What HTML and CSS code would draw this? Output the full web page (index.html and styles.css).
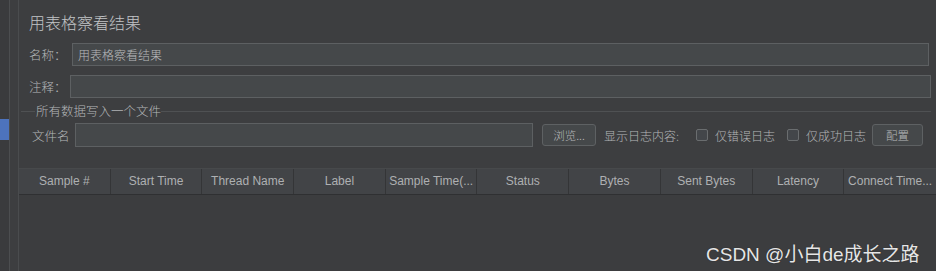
FILE: index.html
```html
<!DOCTYPE html>
<html lang="zh-CN">
<head>
    <meta charset="UTF-8">
    <title>用表格察看结果</title>
    <link rel="stylesheet" href="styles.css">
</head>
<body>
    <div class="app">
        <div class="side"><div class="marker"></div></div>
        <div class="gutter"></div>
        <div class="main">
            <div class="content">
                <h1 class="title">用表格察看结果</h1>

                <div class="row row-name">
                    <label class="label">名称：</label>
                    <div class="field">用表格察看结果</div>
                </div>

                <div class="row row-comment">
                    <label class="label">注释：</label>
                    <div class="field"></div>
                </div>

                <div class="group">
                    <div class="legend"><span>所有数据写入一个文件</span></div>
                    <div class="row row-file">
                        <label class="label">文件名</label>
                        <div class="field file-field"></div>
                        <button class="btn btn-browse">浏览...</button>
                        <span class="log-label">显示日志内容:</span>
                        <span class="check"></span>
                        <span class="check-label">仅错误日志</span>
                        <span class="check"></span>
                        <span class="check-label">仅成功日志</span>
                        <button class="btn btn-config">配置</button>
                    </div>
                </div>
            </div>

            <div class="table">
                <div class="thead">
                    <div class="th">Sample #</div>
                    <div class="th">Start Time</div>
                    <div class="th">Thread Name</div>
                    <div class="th">Label</div>
                    <div class="th">Sample Time(...</div>
                    <div class="th">Status</div>
                    <div class="th">Bytes</div>
                    <div class="th">Sent Bytes</div>
                    <div class="th">Latency</div>
                    <div class="th">Connect Time...</div>
                </div>
                <div class="tbody"></div>
            </div>
        </div>
    </div>

    <div class="watermark">CSDN @小白de成长之路</div>
</body>
</html>
```

FILE: styles.css
```css
* {
    box-sizing: border-box;
    margin: 0;
    padding: 0;
}

body {
    font-family: "Noto Sans CJK SC", "Liberation Sans", sans-serif;
    font-size: 12px;
    color: #b4b6b8;
    background: #3c3d3f;
    width: 936px;
    height: 271px;
    overflow: hidden;
    position: relative;
}

.app {
    display: flex;
    height: 271px;
}

.side {
    width: 10px;
    background: #3a3b3d;
    border-right: 1px solid #4c4e50;
    padding-top: 119px;
}

.marker {
    width: 9px;
    height: 21px;
    background: #4d73bd;
}

.gutter {
    width: 9px;
    background: #3d3e40;
    border-right: 1px solid #4a4c4e;
}

.main {
    flex: 1;
    display: flex;
    flex-direction: column;
    background: #3d3e40;
}

.content {
    padding: 12px 5px 0 10px;
}

.title {
    font-size: 16px;
    font-weight: 300;
    line-height: 20px;
    color: #c2c4c6;
    height: 20px;
}

.row {
    display: flex;
    align-items: center;
}

.label {
    font-size: 12.5px;
    font-weight: 300;
    color: #b4b6b8;
    flex-shrink: 0;
}

.field {
    flex: 1;
    height: 23px;
    background: #45484a;
    border: 1px solid #5d6062;
    font-size: 12px;
    font-weight: 300;
    line-height: 21px;
    padding-left: 5px;
    color: #b8babc;
}

.row-name {
    margin-top: 11px;
}

.row-name .label {
    width: 43px;
}

.row-name .field {
    margin-right: 2px;
}

.row-comment {
    margin-top: 9px;
}

.row-comment .label {
    width: 41px;
}

.group {
    margin-top: 6px;
}

.legend {
    display: flex;
    align-items: center;
    height: 14px;
    margin-left: -8px;
}

.legend::before {
    content: '';
    width: 14px;
    height: 1px;
    background: #4f5153;
}

.legend span {
    color: #b4b6b8;
    font-size: 12.5px;
    font-weight: 300;
    line-height: 14px;
    margin-left: 1px;
}

.legend::after {
    content: '';
    flex: 1;
    height: 1px;
    background: #4f5153;
}

.row-file {
    margin-top: 5px;
    padding-left: 3px;
    height: 24px;
}

.row-file .label {
    width: 43px;
}

.file-field {
    flex: none;
    width: 458px;
    height: 24px;
}

.btn {
    font-family: "Noto Sans CJK SC", "Liberation Sans", sans-serif;
    font-size: 11.5px;
    font-weight: 300;
    color: #b4b6b8;
    background: #45484a;
    border: 1px solid #5e6163;
    border-radius: 3px;
    height: 22px;
}

.btn-browse {
    width: 54px;
    margin-left: 9px;
}

.log-label {
    margin-left: 8px;
    font-size: 12px;
    font-weight: 300;
}

.check {
    width: 12px;
    height: 12px;
    border: 1px solid #6a6d6f;
    border-radius: 2px;
    background: #43464a;
    margin-left: 17px;
}

.check + .check-label {
    margin-left: 7px;
    font-size: 12px;
    font-weight: 300;
}

.check-label + .check {
    margin-left: 12px;
}

.btn-config {
    width: 51px;
    margin-left: 6px;
}

.table {
    margin-top: 21px;
    flex: 1;
    display: flex;
    flex-direction: column;
}

.thead {
    display: grid;
    grid-template-columns: repeat(10, 1fr);
    height: 27px;
    background: #424447;
    border-top: 1px solid #47494b;
    border-bottom: 1px solid #2f3032;
}

.th {
    font-family: "Liberation Sans", sans-serif;
    font-size: 12px;
    color: #aeb0b2;
    line-height: 25px;
    text-align: center;
    border-right: 1px solid #343537;
    white-space: nowrap;
    overflow: hidden;
}

.th:last-child {
    border-right: none;
}

.tbody {
    flex: 1;
    background: #3c3d3f;
}

.watermark {
    position: absolute;
    left: 706px;
    top: 239px;
    font-family: "Liberation Sans", "Noto Sans CJK SC", sans-serif;
    font-size: 19px;
    color: #e6e6e6;
    text-shadow: 0 0 1px #222;
    white-space: nowrap;
}
```
